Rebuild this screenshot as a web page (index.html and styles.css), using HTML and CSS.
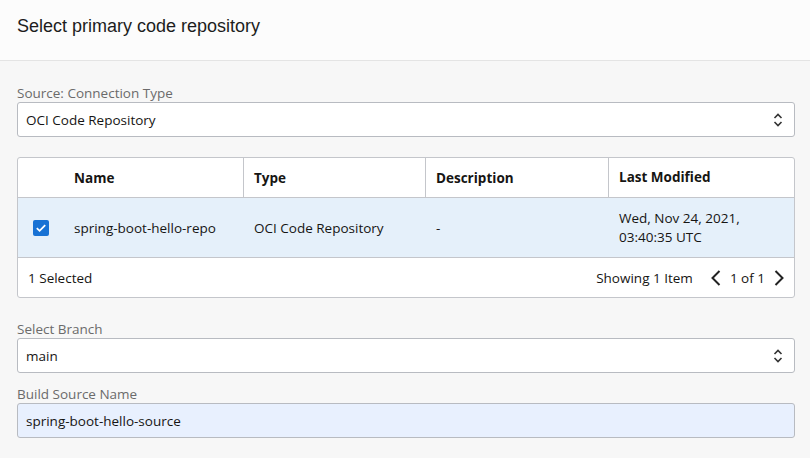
FILE: index.html
```html
<!DOCTYPE html>
<html>
<head>
<meta charset="utf-8">
<link rel="stylesheet" href="styles.css">
</head>
<body>
<div class="header"><h1 class="title">Select primary code repository</h1></div>
<div class="content">
  <div class="field">
    <label class="label">Source: Connection Type</label>
    <div class="control select">
      <span>OCI Code Repository</span>
      <svg class="updown" width="10" height="16" viewBox="0 0 10 16"><path d="M1.5 6 L5 2.5 L8.5 6 M1.5 10 L5 13.5 L8.5 10" fill="none" stroke="#333" stroke-width="1.6"/></svg>
    </div>
  </div>
  <div class="table">
    <div class="row head">
      <div class="cell c0"></div>
      <div class="cell c1">Name</div>
      <div class="cell c2 sep">Type</div>
      <div class="cell c3 sep">Description</div>
      <div class="cell c4 sep">Last Modified</div>
    </div>
    <div class="row body">
      <div class="cell c0"><span class="check"><svg width="16" height="16" viewBox="0 0 16 16"><path d="M3.8 8.2 L6.6 10.8 L12.2 5.2" fill="none" stroke="#fff" stroke-width="1.8"/></svg></span></div>
      <div class="cell c1">spring-boot-hello-repo</div>
      <div class="cell c2">OCI Code Repository</div>
      <div class="cell c3">-</div>
      <div class="cell c4">Wed, Nov 24, 2021,<br>03:40:35 UTC</div>
    </div>
    <div class="foot">
      <span>1 Selected</span>
      <div class="pager">
        <span class="showing">Showing 1 Item</span>
        <svg width="12" height="18" viewBox="0 0 12 18"><path d="M9.5 2 L2.5 9 L9.5 16" fill="none" stroke="#222" stroke-width="2"/></svg>
        <span class="pages">1 of 1</span>
        <svg width="12" height="18" viewBox="0 0 12 18"><path d="M2.5 2 L9.5 9 L2.5 16" fill="none" stroke="#222" stroke-width="2"/></svg>
      </div>
    </div>
  </div>
  <div class="field f2">
    <label class="label">Select Branch</label>
    <div class="control select">
      <span>main</span>
      <svg class="updown" width="10" height="16" viewBox="0 0 10 16"><path d="M1.5 6 L5 2.5 L8.5 6 M1.5 10 L5 13.5 L8.5 10" fill="none" stroke="#333" stroke-width="1.6"/></svg>
    </div>
  </div>
  <div class="field f3">
    <label class="label">Build Source Name</label>
    <div class="control input"><span>spring-boot-hello-source</span></div>
  </div>
</div>
</body>
</html>
```
FILE: styles.css
```css
html, body { margin: 0; padding: 0; }
body {
  width: 810px; height: 458px; overflow: hidden;
  background: #f7f7f7;
  font-family: "Open Sans", "Noto Sans", sans-serif;
  font-size: 13.5px;
  color: #161513;
}
.header {
  height: 60px;
  background: #fcfcfc;
  border-bottom: 1px solid #e4e4e4;
  display: flex; align-items: center;
  padding-left: 17px;
}
.title {
  margin: 0;
  font-family: "Liberation Sans", Arial, sans-serif;
  font-weight: normal;
  font-size: 18px;
  color: #1d1d1d;
  position: relative; top: -4px;
}
.content { padding: 23px 15px 0 17px; }
.field { display: flex; flex-direction: column; }
.label {
  display: block; height: 18px; line-height: 18px;
  color: #6b6b6b; font-size: 13.5px;
}
.control {
  height: 35px; box-sizing: border-box;
  border: 1px solid #b8bbc1; border-radius: 3px;
  background: #fff;
  display: flex; align-items: center; justify-content: space-between;
  padding: 0 11px 0 8px;
}
.control.input { background: #e8f0fe; }
.updown { display: block; }
.table {
  margin-top: 20px;
  background: #fff;
  border: 1px solid #c4c6cb; border-radius: 3px;
  display: flex; flex-direction: column;
}
.row { display: flex; }
.row.head { height: 39px; font-weight: bold; border-bottom: 1px solid #c4c6cb; }
.row.body { height: 59px; background: #e5f0fa; border-bottom: 1px solid #c4c6cb; }
.cell { display: flex; align-items: center; box-sizing: border-box; padding-left: 11px; }
.cell.sep { border-left: 1px solid #c4c6cb; }
.c0 { width: 45px; padding-left: 15px; }
.c1 { width: 180px; padding-left: 11px; }
.c2 { width: 182px; padding-left: 10px; }
.c3 { width: 183px; padding-left: 10px; }
.c4 { flex: 1; padding-left: 10px; line-height: 19px; }
.row.body .c2, .row.body .c3, .row.body .c4 { padding-left: 11px; }
.check {
  width: 16px; height: 16px; border-radius: 2px;
  background: #1872d4; display: block;
}
.check svg { display: block; }
.foot {
  height: 39px; display: flex; align-items: center; justify-content: space-between;
  padding: 0 9px 0 10px;
}
.pager { display: flex; align-items: center; }
.showing { margin-right: 17px; }
.pages { margin: 0 8px 0 8px; }
.pager svg { display: block; }
.f2 { margin-top: 22px; }
.f3 { margin-top: 12px; }
```
